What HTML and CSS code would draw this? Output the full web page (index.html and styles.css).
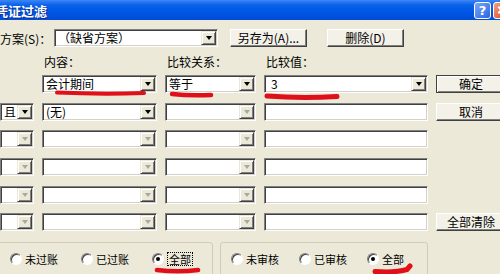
FILE: index.html
```html
<!DOCTYPE html>
<html lang="zh">
<head>
    <meta charset="UTF-8">
    <title>凭证过滤</title>
    <link rel="stylesheet" href="styles.css">
</head>
<body>
<div class="dialog">
    <div class="titlebar">
        <span class="title">凭证过滤</span>
        <div class="caps">
            <span class="cap help">?</span>
            <span class="cap close"></span>
        </div>
    </div>

    <div class="scheme">
        <span class="scheme-label">方案(S)：</span>
        <div class="combo scheme-combo">（缺省方案）<span class="drop"></span></div>
        <div class="btn save">另存为(A)...</div>
        <div class="btn del">删除(D)</div>
    </div>

    <div class="cols labels">
        <span></span>
        <span class="lbl">内容：</span>
        <span class="lbl">比较关系：</span>
        <span class="lbl">比较值：</span>
    </div>

    <div class="cols rows">
        <span></span>
        <div class="combo">会计期间<span class="drop"></span></div>
        <div class="combo">等于<span class="drop"></span></div>
        <div class="combo value">3<span class="drop"></span></div>
        <div class="btn default">确定</div>

        <div class="combo">且<span class="drop"></span></div>
        <div class="combo">(无)<span class="drop"></span></div>
        <div class="combo off"><span class="drop"></span></div>
        <div class="field"></div>
        <div class="btn">取消</div>

        <div class="combo off"><span class="drop"></span></div>
        <div class="combo off"><span class="drop"></span></div>
        <div class="combo off"><span class="drop"></span></div>
        <div class="field"></div>
        <span></span>

        <div class="combo off"><span class="drop"></span></div>
        <div class="combo off"><span class="drop"></span></div>
        <div class="combo off"><span class="drop"></span></div>
        <div class="field"></div>
        <span></span>

        <div class="combo off"><span class="drop"></span></div>
        <div class="combo off"><span class="drop"></span></div>
        <div class="combo off"><span class="drop"></span></div>
        <div class="field"></div>
        <span></span>

        <div class="combo off"><span class="drop"></span></div>
        <div class="combo off"><span class="drop"></span></div>
        <div class="combo off"><span class="drop"></span></div>
        <div class="field"></div>
        <div class="btn">全部清除</div>
    </div>

    <div class="groups">
        <div class="group post">
            <label class="radio"><span class="dot"></span>未过账</label>
            <label class="radio"><span class="dot"></span>已过账</label>
            <label class="radio"><span class="dot on"></span><span class="focus">全部</span></label>
        </div>
        <div class="group audit">
            <label class="radio"><span class="dot"></span>未审核</label>
            <label class="radio"><span class="dot"></span>已审核</label>
            <label class="radio"><span class="dot on"></span>全部</label>
        </div>
    </div>

    <!-- red pen marks drawn over the screenshot -->
    <svg class="marks" width="500" height="274" viewBox="0 0 500 274">
        <path d="M57 92.5 Q100 94.5 144 93" stroke-width="4"/>
        <path d="M172 94 Q190 96 211 95" stroke-width="4.5"/>
        <path d="M267 96 Q300 98.5 337 96.5" stroke-width="5"/>
        <path d="M157 270 Q178 272.5 198 270" stroke-width="4.5"/>
        <path d="M375 271.5 Q395 273 407 269.5 L410 266" stroke-width="5"/>
    </svg>
</div>
</body>
</html>
```

FILE: styles.css
```css
body {
    margin: 0;
    font-family: "Noto Sans CJK SC", "DejaVu Sans", sans-serif;
    font-size: 12px;
    background: #ECE9D8;
    overflow: hidden;
}

.dialog {
    position: relative;
    width: 500px;
    height: 274px;
    overflow: hidden;
    background: #ECE9D8;
    color: #000;
}

.titlebar {
    height: 20px;
    background: linear-gradient(#3C86F6, #0A62EA 25%, #0056E6 60%, #004CD6);
    display: flex;
    align-items: center;
    justify-content: space-between;
}

.title {
    color: #fff;
    font-weight: bold;
    font-size: 13px;
    margin-left: -5px;
    text-shadow: 1px 1px #0B2A8A;
}

.caps {
    display: flex;
    gap: 2px;
    margin-right: -10px;
}

.cap {
    position: relative;
    width: 17px;
    height: 17px;
    box-sizing: border-box;
    border: 1px solid #fff;
    border-radius: 3px;
    color: #fff;
    font: bold 13px "DejaVu Sans", sans-serif;
    display: flex;
    align-items: center;
    justify-content: center;
}

.help {
    background: linear-gradient(135deg, #7AA6F8, #2A66E2);
}

.close {
    background: linear-gradient(135deg, #F2A084, #D9441F);
}

.close::before, .close::after {
    content: "";
    position: absolute;
    width: 9px;
    height: 2px;
    background: #fff;
    transform: rotate(45deg);
}

.close::after {
    transform: rotate(-45deg);
}

.scheme {
    display: flex;
    align-items: center;
    height: 18px;
    margin-top: 9px;
}

.scheme-label {
    width: 54px;
    white-space: nowrap;
}

.scheme-combo {
    width: 164px;
}

.btn.save {
    width: 77px;
    margin-left: 12px;
}

.btn.del {
    width: 77px;
    margin-left: 20px;
}

.cols {
    display: grid;
    grid-template-columns: 34px 115px 91px 164px 70px;
    column-gap: 8px;
}

.labels {
    height: 18px;
    margin-top: 5px;
    align-items: center;
}

.lbl {
    padding-left: 2px;
}

.rows {
    margin-top: 5px;
    grid-auto-rows: 18px;
    row-gap: 9.7px;
}

.combo, .field {
    position: relative;
    height: 18px;
    box-sizing: border-box;
    background: #fff;
    border: 1px solid;
    border-color: #808080 #fff #fff #808080;
    box-shadow: inset 1px 1px #404040, inset -1px -1px #D4D0C8;
    display: flex;
    align-items: center;
    padding-left: 3px;
    white-space: nowrap;
    line-height: 1;
}

.combo.value {
    padding-left: 6px;
}

.drop {
    position: absolute;
    top: 1px;
    right: 1px;
    bottom: 1px;
    width: 15px;
    box-sizing: border-box;
    background: #ECE9D8;
    border: 1px solid;
    border-color: #ECE9D8 #404040 #404040 #ECE9D8;
    box-shadow: inset 1px 1px #fff, inset -1px -1px #808080;
    display: flex;
    align-items: center;
    justify-content: center;
}

.drop::after {
    content: "";
    border-top: 4px solid #000;
    border-left: 3.5px solid transparent;
    border-right: 3.5px solid transparent;
}

.combo.off .drop::after {
    border-top-color: #A8A8A0;
}

.btn {
    height: 18px;
    box-sizing: border-box;
    background: #F3F1E8;
    border: 1px solid;
    border-color: #fff #404040 #404040 #fff;
    box-shadow: inset -1px -1px #808080;
    display: flex;
    align-items: center;
    justify-content: center;
    white-space: nowrap;
    line-height: 1;
}

.btn.default {
    border-color: #404040;
    box-shadow: inset 1px 1px #fff, inset -1px -1px #808080;
}

.groups {
    display: flex;
    margin-top: 10.5px;
}

.group {
    height: 40px;
    box-sizing: border-box;
    border: 1px solid #CFCCBC;
    border-radius: 3px;
    display: flex;
    align-items: flex-start;
    padding-top: 9px;
    font-size: 11px;
}

.group.post {
    width: 215px;
    margin-left: -2px;
    padding-left: 11px;
    gap: 23px;
}

.group.audit {
    width: 208px;
    margin-left: 7px;
    padding-left: 10px;
    gap: 20px;
}

.radio {
    display: flex;
    align-items: center;
    gap: 3px;
    height: 14px;
    white-space: nowrap;
}

.dot {
    width: 12px;
    height: 12px;
    box-sizing: border-box;
    border-radius: 50%;
    background: #fff;
    border: 1px solid;
    border-color: #808080 #fff #fff #808080;
    box-shadow: inset 1px 1px #404040;
    display: flex;
    align-items: center;
    justify-content: center;
}

.dot.on::after {
    content: "";
    width: 4px;
    height: 4px;
    border-radius: 50%;
    background: #000;
}

.focus {
    border: 1px dotted #000;
    padding: 0 1px;
    line-height: 12px;
}

.marks {
    position: absolute;
    top: 0;
    left: 0;
    pointer-events: none;
}

.marks path {
    fill: none;
    stroke: #E0101A;
    stroke-linecap: round;
}
```
